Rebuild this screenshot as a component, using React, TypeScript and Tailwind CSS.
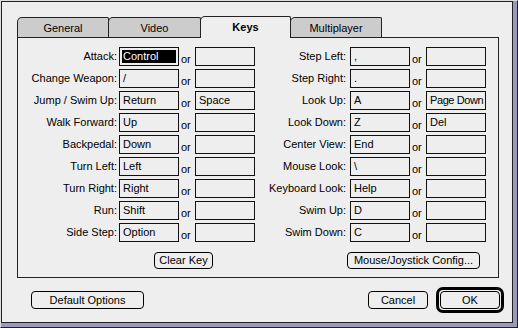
const leftRows: [string, string, string][] = [
  ["Attack:", "Control", ""],
  ["Change Weapon:", "/", ""],
  ["Jump / Swim Up:", "Return", "Space"],
  ["Walk Forward:", "Up", ""],
  ["Backpedal:", "Down", ""],
  ["Turn Left:", "Left", ""],
  ["Turn Right:", "Right", ""],
  ["Run:", "Shift", ""],
  ["Side Step:", "Option", ""],
];

const rightRows: [string, string, string][] = [
  ["Step Left:", ",", ""],
  ["Step Right:", ".", ""],
  ["Look Up:", "A", "Page Down"],
  ["Look Down:", "Z", "Del"],
  ["Center View:", "End", ""],
  ["Mouse Look:", "\\", ""],
  ["Keyboard Look:", "Help", ""],
  ["Swim Up:", "D", ""],
  ["Swim Down:", "C", ""],
];

function KeyField({ value, selected }: { value: string; selected?: boolean }) {
  const tight = value.length > 7 ? "tracking-[-0.4px]" : "";
  return (
    <div className="h-[19px] w-[60px] shrink-0 overflow-hidden border border-[#111] bg-[#eeeeee] p-[1px]">
      {selected ? (
        <div className="m-[1px] h-[13px] bg-black pl-[1px] text-white leading-[13px] whitespace-nowrap">{value}</div>
      ) : (
        <div className={`pl-[2px] leading-[15px] whitespace-nowrap ${tight}`}>{value}</div>
      )}
    </div>
  );
}

function KeyRow({ label, a, b, labelW, gap, selected }: { label: string; a: string; b: string; labelW: string; gap: string; selected?: boolean }) {
  return (
    <div className="flex h-[19px]">
      <div className={`${labelW} ${gap} text-right leading-[19px] whitespace-nowrap`}>{label}</div>
      <KeyField value={a} selected={selected} />
      <div className="flex w-[16px] items-end pl-[2px] leading-[14px]">or</div>
      <KeyField value={b} />
    </div>
  );
}

function Button({ children, className = "" }: { children: React.ReactNode; className?: string }) {
  return (
    <div className={`flex items-center justify-center rounded-[4px] border border-black bg-[#eeeeee] leading-none ${className}`}>
      {children}
    </div>
  );
}

export default function App() {
  return (
    <div className="h-[328px] w-[518px] border-t border-l border-[#dedede] border-r border-b border-r-[#222] border-b-[#222] bg-[#9a9abf] pr-[3px] pb-[3px] font-['Liberation_Sans',Arial,sans-serif] text-[11px] text-black">
      <div className="flex h-[322px] w-[512px] flex-col border border-[#222] bg-[#eeeeee] pt-[15px]">
        {/* tabs */}
        <div className="relative z-10 flex h-[20px] items-end pl-[15px]">
          <div className="flex h-[20px] w-[92px] items-center justify-center rounded-tl-[5px] rounded-tr-[2px] border border-b-0 border-[#222] bg-[#cccccc] pt-[1px]">General</div>
          <div className="-ml-[1px] flex h-[20px] w-[93px] items-center justify-center rounded-tl-[5px] rounded-tr-[2px] border border-b-0 border-[#222] bg-[#cccccc] pt-[1px]">Video</div>
          <div className="-mb-[1px] -ml-[1px] flex h-[22px] w-[91px] items-center justify-center rounded-tl-[5px] rounded-tr-[2px] border border-b-0 border-[#222] bg-[#eeeeee] font-bold">Keys</div>
          <div className="-ml-[1px] flex h-[20px] w-[92px] items-center justify-center rounded-tl-[5px] rounded-tr-[2px] border border-b-0 border-[#222] bg-[#cccccc] pt-[1px]">Multiplayer</div>
        </div>

        {/* panel */}
        <div className="ml-[15px] flex h-[241px] w-[482px] border border-[#222] bg-[#eeeeee] pt-[9px] pb-[8px]">
          <div className="flex w-[237px] flex-col">
            <div className="flex flex-col gap-[3px]">
              {leftRows.map(([l, a, b], i) => (
                <KeyRow key={l} label={l} a={a} b={b} labelW="w-[99px]" gap="mr-[2px]" selected={i === 0} />
              ))}
            </div>
            <Button className="mt-[10px] ml-[136px] h-[17px] w-[59px]">Clear Key</Button>
          </div>
          <div className="ml-[2px] flex w-[229px] flex-col">
            <div className="flex flex-col gap-[3px]">
              {rightRows.map(([l, a, b]) => (
                <KeyRow key={l} label={l} a={a} b={b} labelW="w-[89px]" gap="mr-[4px]" />
              ))}
            </div>
            <Button className="mt-[10px] ml-[90px] h-[17px] w-[133px]">Mouse/Joystick Config...</Button>
          </div>
        </div>

        {/* bottom buttons */}
        <div className="mt-[9px] flex h-[26px] items-center pl-[29px] pr-[8px]">
          <Button className="h-[18px] w-[113px]">Default Options</Button>
          <div className="flex-1" />
          <Button className="h-[18px] w-[60px]">Cancel</Button>
          <div className="ml-[8px] rounded-[7px] border-[3px] border-black p-[1px]">
            <Button className="h-[18px] w-[60px]">OK</Button>
          </div>
        </div>
      </div>
    </div>
  );
}
